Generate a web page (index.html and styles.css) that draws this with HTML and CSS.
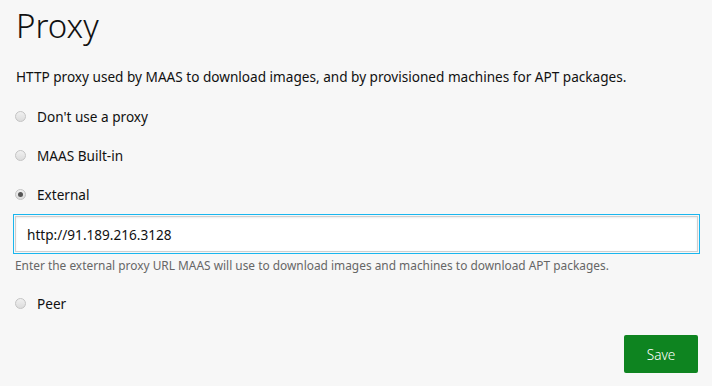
FILE: index.html
```html
<!DOCTYPE html>
<html>
<head>
<meta charset="utf-8">
<link rel="stylesheet" href="styles.css">
</head>
<body>
<main class="page">
  <h1 class="title">Proxy</h1>
  <p class="desc">HTTP proxy used by MAAS to download images, and by provisioned machines for APT packages.</p>
  <form class="form">
    <label class="opt"><span class="radio"></span>Don't use a proxy</label>
    <label class="opt"><span class="radio"></span>MAAS Built-in</label>
    <label class="opt"><span class="radio checked"></span>External</label>
    <div class="field">
      <input class="input" type="text" value="http://91.189.216.3128">
      <p class="help">Enter the external proxy URL MAAS will use to download images and machines to download APT packages.</p>
    </div>
    <label class="opt peer"><span class="radio"></span>Peer</label>
    <div class="actions"><button type="button" class="save">Save</button></div>
  </form>
</main>
</body>
</html>
```
FILE: styles.css
```css
* { box-sizing: border-box; }
html, body { margin: 0; height: 100%; }
body {
  background: #f7f7f7;
  font-family: "Noto Sans", "Open Sans", sans-serif;
  color: #111;
}
.page { padding: 0 14px 0 16px; }
.title {
  margin: 0;
  padding-top: 5px;
  font-size: 33px;
  font-weight: 300;
  line-height: 42px;
  color: #111;
}
.desc {
  margin: 19px 0 0;
  font-size: 13.6px;
  line-height: 22px;
  color: #111;
}
.form { display: flex; flex-direction: column; }
.opt {
  display: flex;
  align-items: center;
  gap: 11px;
  height: 22px;
  font-size: 13.6px;
  color: #111;
  margin-top: 17px;
}
.radio {
  width: 11px;
  height: 11px;
  border-radius: 50%;
  border: 1px solid #c4c4c4;
  background: linear-gradient(#f0f0f0, #dcdcdc);
  margin-left: -1px;
  display: flex;
  align-items: center;
  justify-content: center;
}
.radio.checked::after {
  content: "";
  width: 5px;
  height: 5px;
  border-radius: 50%;
  background: #555;
}
.field { margin: 11px 0 0 -1px; }
.input {
  display: block;
  width: 100%;
  height: 36px;
  margin: 0;
  border: 1px solid #cfcfcf;
  box-shadow: inset 0 1px 2px rgba(0,0,0,0.08);
  outline: 1px solid #19b6ee;
  outline-offset: 1px;
  background: #fff;
  padding: 0 11px;
  font-family: inherit;
  font-size: 13.6px;
  color: #111;
}
.help {
  margin: 5px 0 0;
  font-size: 11.9px;
  line-height: 16px;
  color: #666;
}
.peer { margin-top: 19px; }
.actions { display: flex; justify-content: flex-end; margin-top: 21px; }
.save {
  width: 74px;
  height: 38px;
  background: #0e8420;
  color: #fff;
  border: 0;
  border-radius: 2px;
  font-family: inherit;
  font-size: 13.6px;
  font-weight: 300;
}
```
